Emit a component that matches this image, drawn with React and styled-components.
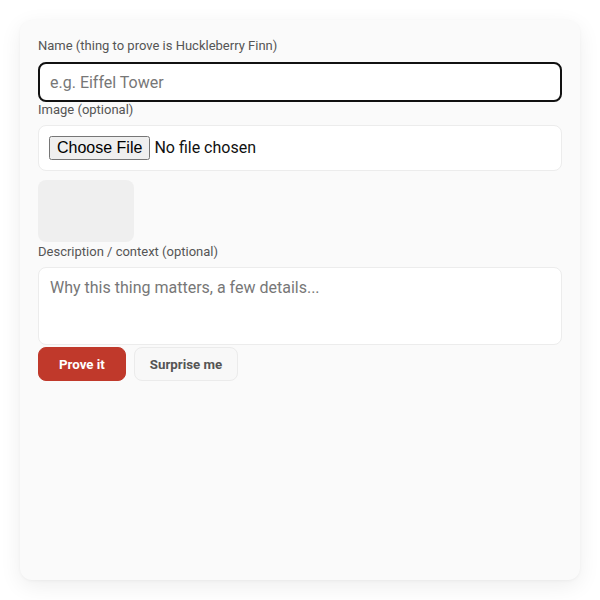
import styled, { createGlobalStyle } from "styled-components";

const GlobalStyle = createGlobalStyle`
  html, body {
    margin: 0;
    padding: 0;
    background: #ffffff;
    font-family: Roboto, "Liberation Sans", Arial, sans-serif;
  }
  * { box-sizing: border-box; }
`;

const Page = styled.div`
  padding: 20px;
  height: 600px;
`;

const Card = styled.form`
  height: 560px;
  background: #fafafa;
  border-radius: 12px;
  box-shadow: 0 6px 22px rgba(0, 0, 0, 0.07), 0 1px 3px rgba(0, 0, 0, 0.04);
  padding: 18px 18px;
  display: flex;
  flex-direction: column;
`;

const Label = styled.label`
  display: block;
  font-size: 13px;
  line-height: 16px;
  color: #555;
  margin-bottom: ${(p) => p.$gap || 7}px;
`;

const TextInput = styled.input`
  width: 100%;
  height: 40px;
  padding: 0 10px;
  border-radius: 8px;
  border: ${(p) => (p.$focused ? "2px solid #111" : "1px solid #e8e8e8")};
  background: #fff;
  font-family: Roboto, "Liberation Sans", Arial, sans-serif;
  font-size: 16px;
  color: #222;
  outline: none;
  &::placeholder { color: #777; }
`;

const FileBox = styled.div`
  height: 46px;
  padding: 0 10px;
  display: flex;
  align-items: center;
  background: #fff;
  border: 1px solid #ececec;
  border-radius: 8px;
  margin-bottom: 9px;
`;

const FileInput = styled.input`
  font-family: Roboto, "Liberation Sans", Arial, sans-serif;
  font-size: 16px;
  color: #111;
`;

const Preview = styled.div`
  width: 96px;
  height: 62px;
  border-radius: 8px;
  background: #efefef;
  margin-bottom: 2px;
`;

const TextArea = styled.textarea`
  width: 100%;
  height: 78px;
  padding: 10px 11px;
  border-radius: 8px;
  border: 1px solid #ececec;
  background: #fff;
  font-family: Roboto, "Liberation Sans", Arial, sans-serif;
  font-size: 16px;
  resize: none;
  outline: none;
  display: block;
  &::placeholder { color: #777; }
`;

const Actions = styled.div`
  display: flex;
  gap: 8px;
  margin-top: 2px;
`;

const Button = styled.button`
  height: 34px;
  padding: 0 ${(p) => (p.$primary ? 20 : 15)}px;
  border-radius: 8px;
  border: 1px solid ${(p) => (p.$primary ? "#c0392b" : "#ebebeb")};
  background: ${(p) => (p.$primary ? "#c0392b" : "#f8f8f8")};
  color: ${(p) => (p.$primary ? "#fff" : "#555")};
  font-family: Roboto, "Liberation Sans", Arial, sans-serif;
  font-size: 13.3px;
  font-weight: 700;
  cursor: pointer;
`;

const App = () => {
  return (
    <Page>
      <GlobalStyle />
      <Card onSubmit={(e) => e.preventDefault()}>
        <Label $gap={8}>Name (thing to prove is Huckleberry Finn)</Label>
        <TextInput $focused type="text" placeholder="e.g. Eiffel Tower" />
        <Label>Image (optional)</Label>
        <FileBox>
          <FileInput type="file" accept="image/*" />
        </FileBox>
        <Preview />
        <Label>Description / context (optional)</Label>
        <TextArea placeholder="Why this thing matters, a few details..." />
        <Actions>
          <Button $primary type="submit">Prove it</Button>
          <Button type="button">Surprise me</Button>
        </Actions>
      </Card>
    </Page>
  );
};

export default App;
